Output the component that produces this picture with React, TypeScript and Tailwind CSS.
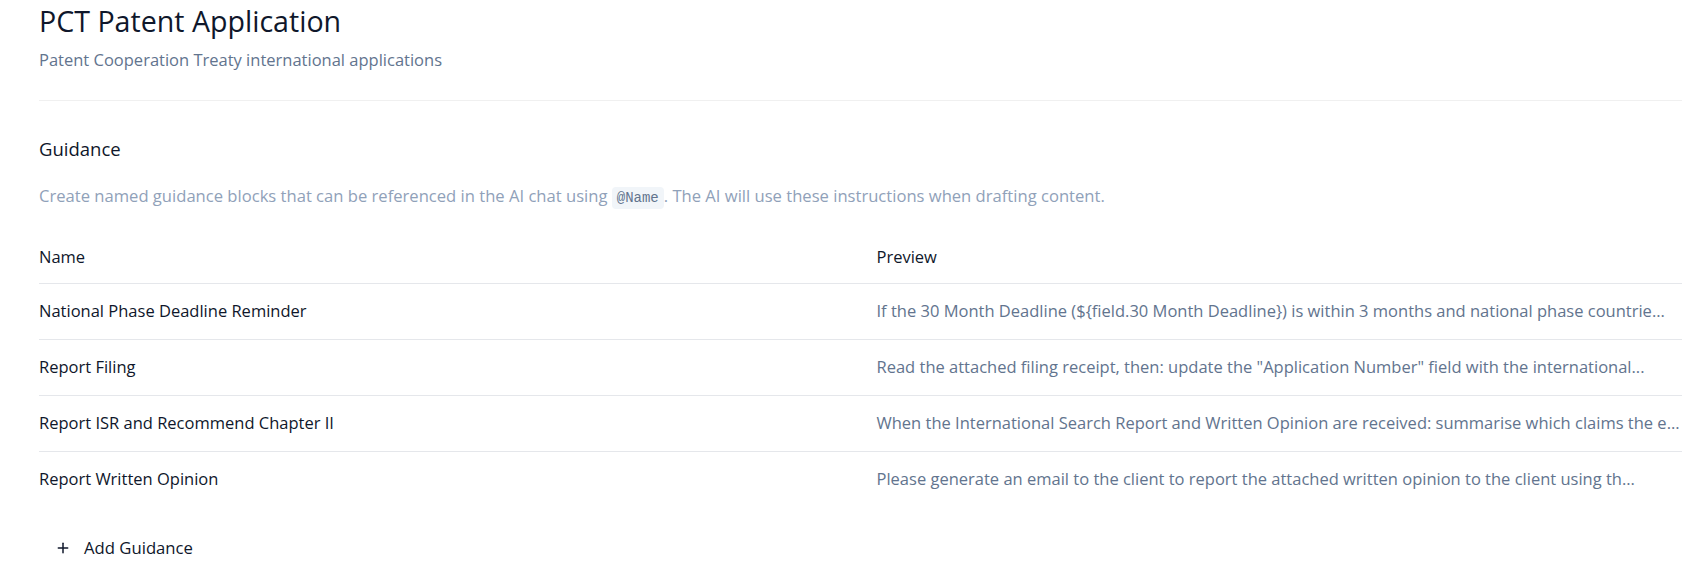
import { Plus } from 'lucide-react'

const guidance = [
  {
    name: 'National Phase Deadline Reminder',
    preview:
      'If the 30 Month Deadline (${field.30 Month Deadline}) is within 3 months and national phase countrie...',
  },
  {
    name: 'Report Filing',
    preview: 'Read the attached filing receipt, then: update the "Application Number" field with the international...',
  },
  {
    name: 'Report ISR and Recommend Chapter II',
    preview:
      'When the International Search Report and Written Opinion are received: summarise which claims the e...',
  },
  {
    name: 'Report Written Opinion',
    preview: 'Please generate an email to the client to report the attached written opinion to the client using th...',
  },
]

export default function App() {
  return (
    <div className="min-h-screen bg-white font-['Open_Sans',sans-serif] text-[16.5px] text-slate-900">
      <div className="pl-[39px] pr-[15px] pt-[4px]">
        <div className="border-b border-[#f0f0f0] pb-[28px]">
          <h1 className="text-[28.6px] leading-[34px] text-slate-900">PCT Patent Application</h1>
          <p className="mt-[10px] leading-6 text-slate-500">Patent Cooperation Treaty international applications</p>
        </div>

        <section className="pt-[34px]">
          <h2 className="text-[18.5px] leading-7 text-slate-900">Guidance</h2>
          <p className="mt-[21px] text-[16.6px] leading-6 text-slate-400">
            Create named guidance blocks that can be referenced in the AI chat using{' '}
            <code className="rounded bg-slate-100 px-[5px] py-[3px] font-['Liberation_Mono',monospace] text-[14px] text-slate-500">
              @Name
            </code>
            . The AI will use these instructions when drafting content.
          </p>

          <div className="mt-[22px]">
            <div className="grid h-[51px] grid-cols-2 items-center">
              <div className="pr-4">Name</div>
              <div className="pl-4">Preview</div>
            </div>
            {guidance.map((g) => (
              <div key={g.name} className="grid h-[56px] grid-cols-2 items-center border-t border-gray-200">
                <div className="pr-4 text-slate-900">{g.name}</div>
                <div className="whitespace-nowrap pl-4 text-slate-500">{g.preview}</div>
              </div>
            ))}
          </div>

          <button className="mt-[21px] flex h-10 items-center gap-[13px] px-4 text-slate-900">
            <Plus className="h-4 w-4" strokeWidth={2.25} />
            <span className="text-[16.7px]">Add Guidance</span>
          </button>
        </section>
      </div>
    </div>
  )
}
